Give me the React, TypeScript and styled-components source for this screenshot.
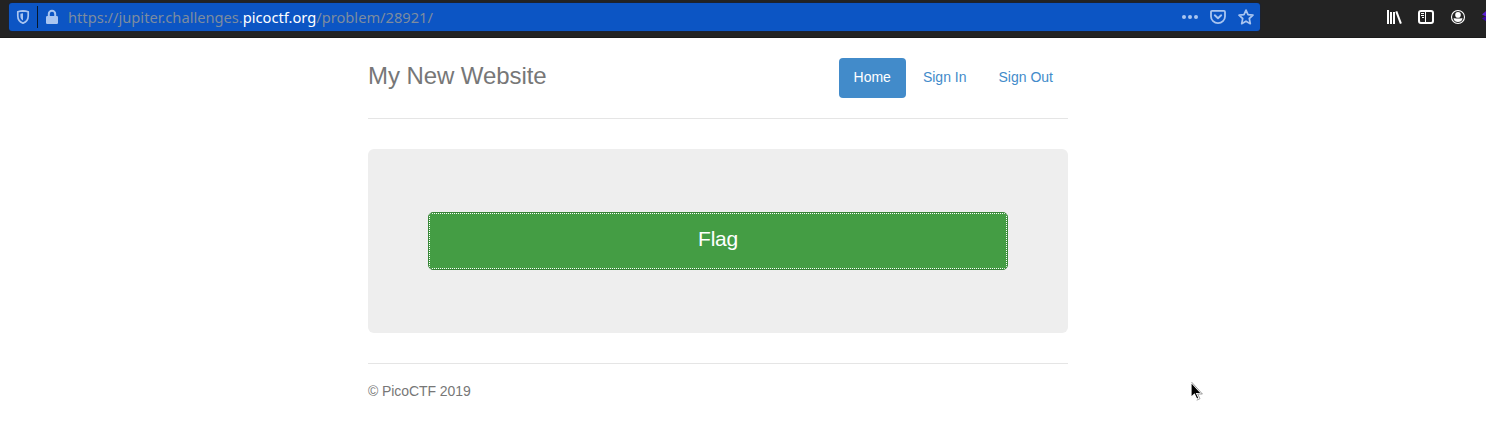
import React from "react";
import styled, { createGlobalStyle } from "styled-components";

const GlobalStyle = createGlobalStyle`
  * { box-sizing: border-box; }
  body { margin: 0; background: #fff; overflow: hidden; }
`;

const Page = styled.div`
  position: relative;
  height: 429px;
  font: 14px/20px "Liberation Sans", Arial, sans-serif;
  color: #333;
`;

const Toolbar = styled.div`
  display: flex;
  align-items: flex-start;
  justify-content: space-between;
  height: 38px;
  padding: 3px 0 0 9px;
  background: #232323;
  border-bottom: 1px solid #1b1b1b;
  overflow: hidden;
`;

const AddressBar = styled.div`
  display: flex;
  align-items: center;
  width: 1251px;
  height: 28px;
  padding: 0 6px;
  border-radius: 3px;
  background: #0c55c4;
  box-shadow: 0 0 0 1px #1c2230;
  color: #a9c5f0;
  svg { display: block; flex: none; }
`;

const Divider = styled.span`
  width: 1px;
  height: 22px;
  margin: 0 6px;
  background: #06182f;
`;

const Url = styled.span`
  flex: 1;
  margin-left: 8px;
  font: 14.67px/28px "Noto Sans", sans-serif;
  white-space: nowrap;
  color: #7d8c9f;
  b { font-weight: 400; color: #fff; }
`;

const BarActions = styled.div`
  display: flex;
  align-items: center;
  gap: 12px;
`;

const BrowserActions = styled.div`
  display: flex;
  align-items: center;
  gap: 16px;
  height: 28px;
  width: 100px;
  color: #fff;
  overflow: hidden;
  svg { display: block; flex: none; }
`;

const Container = styled.main`
  width: 700px;
  margin-left: 368px;
  padding-top: 20px;
`;

const Header = styled.header`
  display: flex;
  justify-content: space-between;
  height: 61px;
  margin-bottom: 30px;
  border-bottom: 1px solid #e5e5e5;
`;

const Title = styled.h3`
  margin: -2px 0 0;
  font-size: 24px;
  line-height: 40px;
  letter-spacing: -0.07px;
  font-weight: 400;
  color: #777;
`;

const Nav = styled.nav`
  display: flex;
  gap: 2px;
`;

const NavLink = styled.a<{ $active?: boolean }>`
  height: 40px;
  padding: 9px 15px 11px;
  border-radius: 4px;
  color: ${(p) => (p.$active ? "#fff" : "#428bca")};
  background: ${(p) => (p.$active ? "#428bca" : "transparent")};
`;

const Jumbotron = styled.section`
  height: 184px;
  padding: 63px 60px 0;
  border-radius: 6px;
  background: #eee;
`;

const FlagButton = styled.a`
  display: flex;
  height: 58px;
  border: 1px solid #398439;
  border-radius: 5px;
  background: #449d44;
  overflow: hidden;
`;

const FocusRing = styled.span`
  flex: 1;
  border: 1px dotted #fff;
  font-size: 21px;
  letter-spacing: -0.25px;
  line-height: 50px;
  text-align: center;
  color: #fff;
`;

const Footer = styled.footer`
  margin-top: 30px;
  padding-top: 17px;
  border-top: 1px solid #e5e5e5;
  letter-spacing: -0.07px;
  color: #777;
`;

const Pointer = styled.svg`
  position: absolute;
  left: 1190px;
  top: 381px;
`;

const ShieldIcon = () => (
  <svg width="16" height="16" viewBox="0 0 16 16" fill="none">
    <path d="M8 1.800c2 .1 3.700.5 5.200 1v4.200c0 3.500-1.900 5.900-5.200 7.200-3.300-1.300-5.200-3.700-5.200-7.200V2.800c1.500-.5 3.200-.9 5.200-1z" stroke="currentColor" strokeWidth="1.700" />
    <path d="M8 4.300v7.200c-1.700-1-2.600-2.400-2.600-4.500V4.800z" fill="currentColor" />
  </svg>
);

const LockIcon = () => (
  <svg width="16" height="16" viewBox="0 0 16 16" fill="none">
    <path d="M4.800 8V5a3.200 3.200 0 0 1 6.400 0v3" stroke="currentColor" strokeWidth="2" />
    <rect x="2" y="7" width="12" height="8" rx="1.200" fill="currentColor" />
  </svg>
);

const DotsIcon = () => (
  <svg width="16" height="16" viewBox="0 0 16 16" fill="currentColor">
    <circle cx="2" cy="8" r="2" />
    <circle cx="8" cy="8" r="2" />
    <circle cx="14" cy="8" r="2" />
  </svg>
);

const PocketIcon = () => (
  <svg width="16" height="16" viewBox="0 0 16 16" fill="none" stroke="currentColor" strokeLinecap="round" strokeLinejoin="round">
    <path d="M2 1.900h12a1 1 0 0 1 1 1V7.500a7 6.600 0 0 1-14 0V2.900a1 1 0 0 1 1-1z" strokeWidth="1.800" />
    <path d="M4.800 6.300 8 9.300l3.200-3" strokeWidth="1.900" />
  </svg>
);

const StarIcon = () => (
  <svg width="16" height="16" viewBox="0 0 16 16" fill="none" stroke="currentColor" strokeWidth="1.700" strokeLinejoin="round">
    <path d="m8 1.100 2 4.500 5 .6-3.700 3.300 1 5.200L8 12.200l-4.300 2.500 1-5.200L1 6.200l5-.6z" />
  </svg>
);

const LibraryIcon = () => (
  <svg width="16" height="16" viewBox="0 0 16 16" fill="none" stroke="currentColor" strokeWidth="2">
    <path d="M2 1v14M5 3v12M8 3v12" />
    <path d="m10.300 2.300 4.600 12.400" />
  </svg>
);

const SidebarIcon = () => (
  <svg width="16" height="16" viewBox="0 0 16 16" fill="none" stroke="currentColor">
    <rect x="1" y="2" width="14" height="12" rx="2" strokeWidth="2" />
    <path d="M7.500 2v12" />
    <path d="M3 4.500h3M3 6.500h3M4 8.500h2" />
  </svg>
);

const AccountIcon = () => (
  <svg width="16" height="16" viewBox="0 0 16 16">
    <circle cx="8" cy="8" r="6.500" fill="none" stroke="currentColor" strokeWidth="1.100" />
    <circle cx="8" cy="5.900" r="2.800" fill="currentColor" />
    <path d="M3.500 9.400c1.200-.5 2.100.2 4.500.2s3.300-.7 4.500-.2c-.4 2.300-2.200 3.600-4.500 3.600S3.900 11.700 3.500 9.400z" fill="currentColor" />
  </svg>
);

const ExtensionIcon = () => (
  <svg width="16" height="16" viewBox="0 0 16 16">
    <path d="M0 5.500 5 1v7z" fill="#5a1fd0" />
    <path d="m0 9.500 3-2 3 1v5z" fill="#3b07a6" />
  </svg>
);

export default function App() {
  return (
    <Page>
      <GlobalStyle />
      <Toolbar>
        <AddressBar>
          <ShieldIcon />
          <Divider />
          <LockIcon />
          <Url>https://jupiter.challenges.<b>picoctf.org</b>/problem/28921/</Url>
          <BarActions>
            <DotsIcon />
            <PocketIcon />
            <StarIcon />
          </BarActions>
        </AddressBar>
        <BrowserActions>
          <LibraryIcon />
          <SidebarIcon />
          <AccountIcon />
          <ExtensionIcon />
        </BrowserActions>
      </Toolbar>
      <Container>
        <Header>
          <Title>My New Website</Title>
          <Nav>
            <NavLink $active>Home</NavLink>
            <NavLink>Sign In</NavLink>
            <NavLink>Sign Out</NavLink>
          </Nav>
        </Header>
        <Jumbotron>
          <FlagButton>
            <FocusRing>Flag</FocusRing>
          </FlagButton>
        </Jumbotron>
        <Footer>© PicoCTF 2019</Footer>
      </Container>
      <Pointer width="14" height="22" viewBox="0 0 14 22">
        <path d="M1 1v15.500l3.400-3.200 2.400 5 2.200-1-2.300-4.800H11.500z" fill="#000" stroke="#fff" strokeWidth="1.200" />
        <path d="m7.700 13 2.300 4.700-3.300 1.500M7.700 13h4.700L1.500 1" fill="none" stroke="#777" strokeWidth=".7" />
      </Pointer>
    </Page>
  );
}
